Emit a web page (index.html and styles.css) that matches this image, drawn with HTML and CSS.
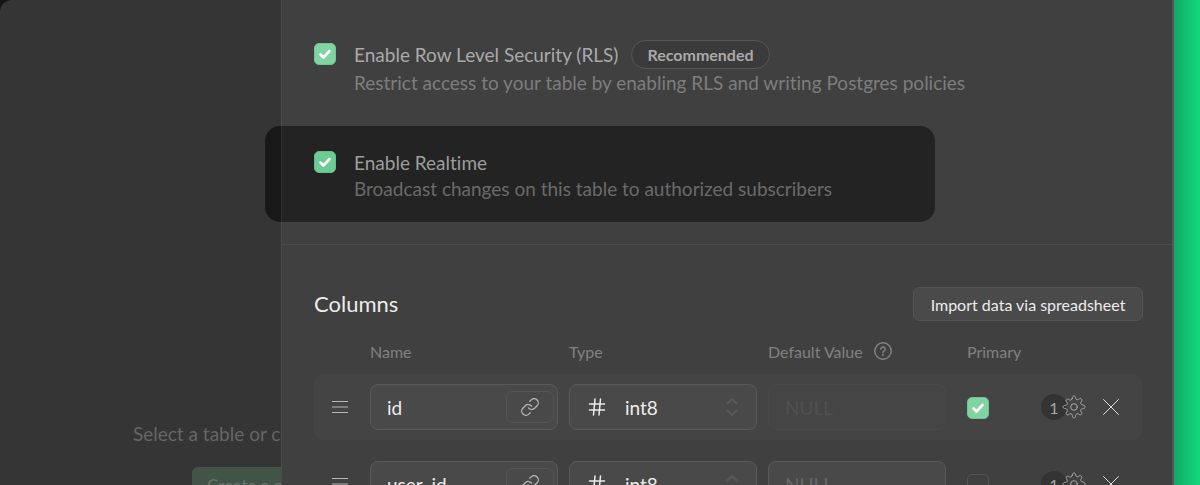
FILE: index.html
```html
<!DOCTYPE html>
<html lang="en">
<head>
<meta charset="utf-8">
<title>Table editor</title>
<link rel="stylesheet" href="styles.css">
</head>
<body>
<svg class="sprite" aria-hidden="true">
  <symbol id="menu" viewBox="0 0 16 12"><path d="M0 .5h16M0 6h16M0 11.500h16"/></symbol>
  <symbol id="link" viewBox="0 0 24 24"><path d="M10 13a5 5 0 0 0 7.540.540l3-3a5 5 0 0 0-7.070-7.070l-1.720 1.710M14 11a5 5 0 0 0-7.540-.540l-3 3a5 5 0 0 0 7.070 7.070l1.710-1.710"/></symbol>
  <symbol id="hash" viewBox="0 0 18 18"><path d="M1.500 6h15M1.500 12h15M7 1L5.500 17M12.500 1L11 17"/></symbol>
  <symbol id="sort" viewBox="0 0 12 20"><path d="M1.500 6.500L6 2l4.500 4.500M1.500 13.500L6 18l4.500-4.500"/></symbol>
  <symbol id="cross" viewBox="0 0 16 16"><path d="M.5.5l15 15M15.500.5l-15 15"/></symbol>
  <symbol id="help" viewBox="0 0 18 18"><circle cx="9" cy="9" r="8.200"/><path d="M6.800 7.200a2.200 2.200 0 1 1 3.200 2c-.7.400-1 .7-1 1.500M9 12.400v1"/></symbol>
  <symbol id="gear" viewBox="0 0 24 24"><circle cx="12" cy="12" r="3.300"/><path id="tooth" d="M10.300 3.200C10.500 1.800 10.900 1 12 1s1.500.8 1.700 2.200c.2 1.500 1.700 2.100 2.900 1.200 1.100-.9 2-1.100 2.800-.3s.6 1.700-.3 2.800c-.9 1.200-.3 2.700 1.200 2.900 1.900.3 2.700.9 2.700 2.200s-.8 1.500-2.700 1.700c-1.500.2-2.100 1.700-1.200 2.900.9 1.100 1.100 2 .3 2.800s-1.700.6-2.800-.3c-1.200-.9-2.700-.3-2.900 1.200-.2 1.900-.6 2.700-1.700 2.700s-1.500-.8-1.700-2.700c-.2-1.500-1.700-2.100-2.900-1.200-1.100.9-2 1.100-2.800.3s-.6-1.700.3-2.800c.9-1.200.3-2.700-1.200-2.900C1.800 13.500 1 13.100 1 12s.8-1.500 2.700-1.700c1.500-.2 2.100-1.700 1.200-2.900-.9-1.100-1.100-2-.3-2.800s1.700-.6 2.800.3c1.200.9 2.700-.2 2.900-1.700z"/></symbol>
</svg>
<div class="app">
  <main class="backdrop">
    <p class="backdrop-text">Select a table or c</p>
    <button class="create">Create a n</button>
  </main>
  <section class="panel">
    <div class="option">
      <input class="check" type="checkbox" id="rls" checked>
      <div>
        <div class="option-head"><label for="rls">Enable Row Level Security (RLS)</label><span class="badge">Recommended</span></div>
        <p class="hint">Restrict access to your table by enabling RLS and writing Postgres policies</p>
      </div>
    </div>
    <div class="option highlight">
      <input class="check" type="checkbox" id="realtime" checked>
      <div>
        <div class="option-head"><label for="realtime">Enable Realtime</label></div>
        <p class="hint">Broadcast changes on this table to authorized subscribers</p>
      </div>
    </div>
    <div class="columns">
      <header class="columns-head">
        <h2>Columns</h2>
        <button class="import">Import data via spreadsheet</button>
      </header>
      <div class="grid labels">
        <span></span><span id="name">Name</span><span id="type">Type</span>
        <span class="with-icon"><span id="default">Default Value</span><svg class="help"><use href="#help"/></svg></span>
        <span id="primary" class="primary">Primary</span>
      </div>
      <div class="grid row first">
        <svg class="menu"><use href="#menu"/></svg>
        <div class="field"><input aria-labelledby="name" value="id"><button class="link" aria-label="Link"><svg><use href="#link"/></svg></button></div>
        <div class="field type"><svg class="hash"><use href="#hash"/></svg><select aria-labelledby="type"><option>int8</option></select><svg class="sort"><use href="#sort"/></svg></div>
        <div class="field disabled"><input aria-labelledby="default" placeholder="NULL" disabled></div>
        <div class="primary"><input class="check" type="checkbox" aria-labelledby="primary" checked></div>
        <button class="settings" aria-label="Settings"><span class="count">1</span><svg><use href="#gear"/></svg></button>
        <button class="remove" aria-label="Remove"><svg><use href="#cross"/></svg></button>
      </div>
      <div class="grid row">
        <svg class="menu"><use href="#menu"/></svg>
        <div class="field"><input aria-labelledby="name" value="user_id"><button class="link" aria-label="Link"><svg><use href="#link"/></svg></button></div>
        <div class="field type"><svg class="hash"><use href="#hash"/></svg><select aria-labelledby="type"><option>int8</option></select><svg class="sort"><use href="#sort"/></svg></div>
        <div class="field"><input aria-labelledby="default" placeholder="NULL"></div>
        <div class="primary"><input class="check" type="checkbox" aria-labelledby="primary"></div>
        <button class="settings" aria-label="Settings"><span class="count">1</span><svg><use href="#gear"/></svg></button>
        <button class="remove" aria-label="Remove"><svg><use href="#cross"/></svg></button>
      </div>
    </div>
  </section>
</div>
</body>
</html>
```
FILE: styles.css
```css
* { box-sizing: border-box; }
body {
  margin: 0;
  height: 100vh;
  overflow: hidden;
  padding-right: 26px;
  background: linear-gradient(to right, #12aa65, #12d87c) right / 26px 100% no-repeat #151515;
  font-family: Lato, "Open Sans", sans-serif;
  font-size: 19px;
  font-variant-ligatures: none;
  color: #ececec;
}
p, h2 { margin: 0; font-weight: 400; }
button, input, select { font: inherit; color: inherit; margin: 0; }
button { padding: 0; border: 0; background: none; }
svg { display: block; fill: none; stroke: currentColor; stroke-linecap: round; stroke-linejoin: round; }
.sprite { display: none; }
.app {
  display: flex;
  height: 100%;
  background: #353535;
  border-top-left-radius: 12px;
}
.backdrop {
  flex: 0 0 281px;
  overflow: hidden;
  padding: 422px 0 0 133px;
  color: #666;
  white-space: nowrap;
}
.backdrop-text { line-height: 24px; }
.create {
  margin: 21px 0 0 59px;
  width: 160px;
  height: 36px;
  padding-left: 15px;
  border-radius: 6px;
  background: #425448;
  color: #65756b;
  font-size: 17px;
  text-align: left;
}
.panel {
  flex: 1;
  min-width: 0;
  padding-top: 40px;
  background: #404040;
  border-left: 1px solid #4b4b4b;
  border-right: 2px solid #5a5656;
}
.option { display: flex; gap: 18px; padding-left: 32px; }
.option > .check { margin-top: 3px; }
.option-head { display: flex; align-items: center; gap: 13px; height: 29px; color: #a9a9a9; }
.hint { line-height: 28px; color: #7d7d7d; }
.badge {
  height: 29px;
  padding: 0 15px;
  border: 1px solid #565656;
  border-radius: 15px;
  background: #3b3b3b;
  font-size: 16px;
  font-weight: 700;
  line-height: 28px;
}
.highlight {
  width: 670px;
  height: 96px;
  margin: 29px 0 0 -17px;
  padding: 22px 0 0 49px;
  border-radius: 15px;
  background: linear-gradient(to right, #181818 16px, #303030 16px, #303030 17px, #232323 17px);
}
.highlight .hint { line-height: 24px; color: #6a6a6a; }
.highlight .option-head { color: #9d9d9d; }
.check {
  appearance: none;
  flex: none;
  width: 22px;
  height: 22px;
  border: 1px solid #565656;
  border-radius: 5px;
}
.check:checked {
  border-color: #73c495;
  background: #80d4a2 url("data:image/svg+xml,%3Csvg xmlns='http://www.w3.org/2000/svg' viewBox='0 0 20 20'%3E%3Cpath d='M5.500 10.500l3 3 6-6.500' fill='none' stroke='white' stroke-width='2.600' stroke-linecap='round' stroke-linejoin='round'/%3E%3C/svg%3E") center / 20px;
}
.highlight .check { border-color: #64bd8a; background-color: #6ecb95; }
.columns { margin-top: 22px; padding: 42px 30px 0 32px; border-top: 1px solid #4b4b4b; }
.columns-head { display: flex; align-items: center; justify-content: space-between; margin-right: -1px; }
h2 { font-size: 22px; line-height: 34px; }
.import {
  width: 230px;
  height: 34px;
  border: 1px solid #555;
  border-radius: 6px;
  background: #4a4a4a;
  font-size: 16px;
}
.grid {
  display: grid;
  grid-template-columns: 45px minmax(0, 188fr) minmax(0, 188fr) minmax(0, 178fr) 73px 46px 44px;
  column-gap: 11px;
  align-items: center;
}
.labels { height: 40px; margin: 10px 0 3px; font-size: 16px; color: #818181; }
.with-icon { display: flex; align-items: center; gap: 11px; }
.help { width: 18px; height: 18px; stroke-width: 1.5; }
.primary { padding-left: 10px; }
.row { height: 66px; margin-bottom: 11px; border-radius: 10px; }
.first { background: #444; }
.menu { width: 16px; height: 12px; margin-left: 18px; stroke: #b5b5b5; }
.field {
  display: flex;
  align-items: center;
  height: 46px;
  padding: 0 3px 0 16px;
  border: 1px solid #5a5a5a;
  border-radius: 8px;
  background: #494949;
}
.field input, .field select {
  flex: 1;
  min-width: 0;
  padding: 0;
  border: 0;
  outline: 0;
  background: none;
}
.field select { appearance: none; }
.field input::placeholder { color: #666; opacity: 1; }
.disabled { border-color: #494949; background: #454545; }
.disabled input::placeholder { color: #505050; }
.link {
  display: grid;
  place-items: center;
  flex: none;
  width: 48px;
  height: 32px;
  border: 1px solid #555;
  border-radius: 7px;
  color: #b8b8b8;
}
.link svg { width: 20px; height: 20px; stroke-width: 1.5; }
.type { padding: 0 18px; }
.hash { flex: none; width: 18px; height: 18px; margin-right: 19px; stroke-width: 1.5; }
.sort { flex: none; width: 12px; height: 20px; stroke: #5a5a5a; stroke-width: 2; }
.row .primary { padding-top: 2px; display: flex; }
.settings { display: flex; align-items: center; color: #a8a8a8; }
.settings svg { flex: none; width: 24px; height: 24px; margin-left: -5px; position: relative; }
.count { flex: none; width: 26px; height: 26px; border-radius: 50%; background: #333; font-size: 16px; line-height: 27px; }
.remove { padding-left: 5px; color: #ddd; }
.remove svg { width: 16px; height: 16px; }
```
